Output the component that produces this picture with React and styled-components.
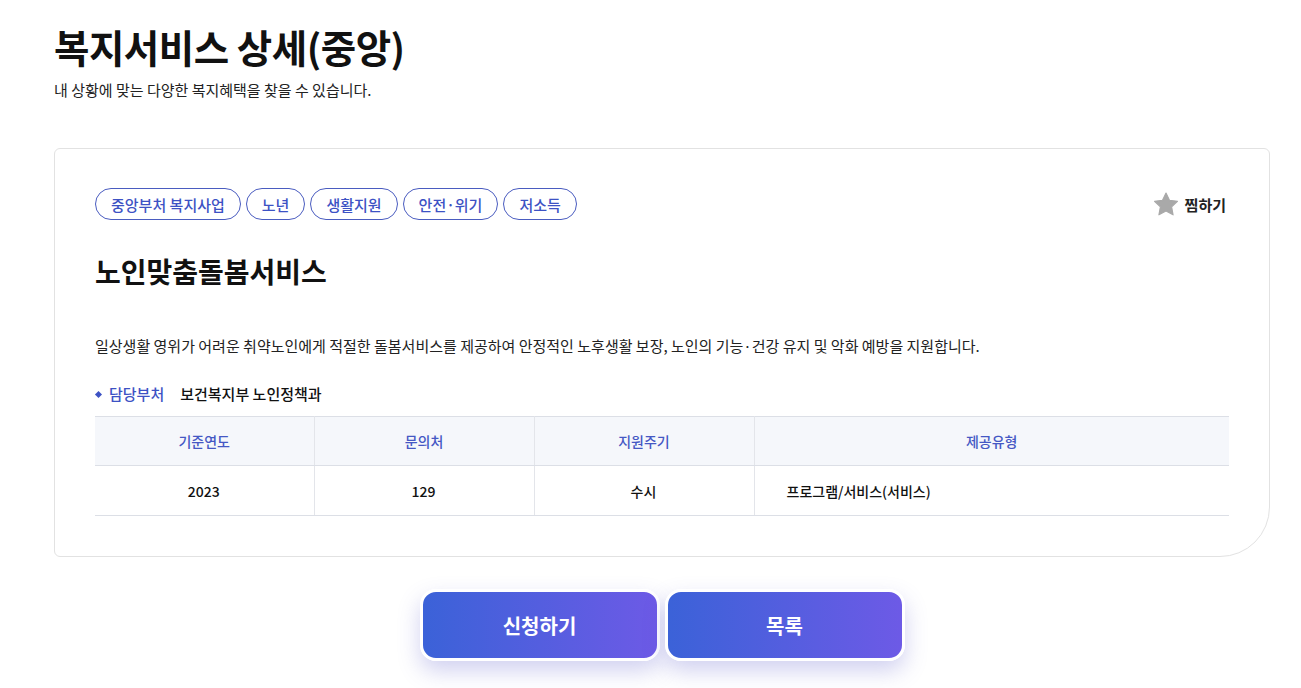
import React from "react";
import styled, { createGlobalStyle } from "styled-components";

const Global = createGlobalStyle`
  html, body { margin: 0; padding: 0; background: #fff; }
  body { font-family: "Noto Sans CJK KR", "Noto Sans", sans-serif; color: #111; }
  * { box-sizing: border-box; }
`;

const Page = styled.div`
  padding: 18px 31px 40px 54px;
`;

const PageTitle = styled.h1`
  margin: 0;
  font-size: 38.5px;
  font-weight: 700;
  line-height: 56px;
  letter-spacing: -0.5px;
  color: #111;
`;

const PageSub = styled.p`
  margin: 6px 0 0;
  font-size: 15px;
  line-height: 20px;
  color: #222;
`;

const Card = styled.section`
  margin-top: 48px;
  border: 1px solid #e2e2e2;
  border-radius: 6px 6px 50px 6px;
  padding: 39px 40px 40px 40px;
`;

const TopRow = styled.div`
  display: flex;
  align-items: center;
  justify-content: space-between;
`;

const Tags = styled.div`
  display: flex;
  gap: 5px;
`;

const Tag = styled.span`
  display: inline-flex;
  align-items: center;
  height: 32px;
  padding: 0 15px;
  border: 1px solid #4a5cc0;
  border-radius: 16px;
  color: #3d52c4;
  font-size: 15px;
  font-weight: 500;
`;

const Fav = styled.button`
  display: flex;
  align-items: center;
  gap: 5px;
  border: 0;
  background: none;
  padding: 0;
  margin-right: 3px;
  font-family: inherit;
  font-size: 15px;
  font-weight: 700;
  color: #222;
  cursor: pointer;
`;

const ServiceTitle = styled.h2`
  margin: 31px 0 0;
  font-size: 28px;
  font-weight: 700;
  line-height: 40px;
  color: #111;
`;

const Desc = styled.p`
  margin: 44px 0 0;
  font-size: 15px;
  line-height: 22px;
  color: #222;
`;

const Dept = styled.div`
  margin-top: 26px;
  display: flex;
  align-items: center;
  font-size: 15px;
  line-height: 22px;
`;

const DeptLabel = styled.span`
  color: #3d52c4;
  font-weight: 500;
  display: flex;
  align-items: center;
  &::before {
    content: "";
    width: 5px;
    height: 5px;
    background: #3d52c4;
    transform: rotate(45deg);
    margin: 0 8px 0 1px;
  }
`;

const DeptValue = styled.span`
  margin-left: 16px;
  font-weight: 500;
  color: #111;
`;

const Table = styled.table`
  margin-top: 11px;
  width: 100%;
  border-collapse: collapse;
  border-top: 1px solid #dcdfe6;
  table-layout: fixed;
`;

const Th = styled.th`
  height: 49px;
  background: #f5f7fb;
  color: #4558c4;
  font-size: 14px;
  font-weight: 500;
  text-align: center;
  border-bottom: 1px solid #dcdfe6;
  border-left: 1px solid #e3e5ea;
  &:first-child { border-left: 0; }
`;

const Td = styled.td`
  height: 50px;
  font-size: 14px;
  font-weight: 500;
  color: #111;
  text-align: ${(p) => (p.$left ? "left" : "center")};
  padding-left: ${(p) => (p.$left ? "32px" : "0")};
  border-bottom: 1px solid #dcdfe6;
  border-left: 1px solid #e3e5ea;
  &:first-child { border-left: 0; }
`;

const Actions = styled.div`
  display: flex;
  justify-content: center;
  gap: 5px;
  margin-top: 32px;
`;

const Btn = styled.button`
  width: 240px;
  height: 72px;
  border: 3px solid #fff;
  border-radius: 16px;
  background: linear-gradient(90deg, #3b62d8 0%, #6d5ae6 100%);
  box-shadow: 0 10px 22px rgba(90, 90, 200, 0.28);
  color: #fff;
  font-family: inherit;
  font-size: 20px;
  font-weight: 700;
  cursor: pointer;
`;

const Star = () => (
  <svg width="28" height="27" viewBox="0 0 24 24" aria-hidden="true">
    <path
      d="M12 1.8l3.1 6.5 7.1.9-5.2 4.9 1.3 7.1L12 17.8l-6.3 3.4 1.3-7.1-5.2-4.9 7.1-.9z"
      fill="#a9a9a9"
      stroke="#a9a9a9"
      strokeWidth="1"
      strokeLinejoin="round"
    />
  </svg>
);

export default function App() {
  const tags = ["중앙부처 복지사업", "노년", "생활지원", "안전·위기", "저소득"];
  return (
    <>
      <Global />
      <Page>
        <PageTitle>복지서비스 상세(중앙)</PageTitle>
        <PageSub>내 상황에 맞는 다양한 복지혜택을 찾을 수 있습니다.</PageSub>
        <Card>
          <TopRow>
            <Tags>
              {tags.map((t) => (
                <Tag key={t}>{t}</Tag>
              ))}
            </Tags>
            <Fav>
              <Star />
              찜하기
            </Fav>
          </TopRow>
          <ServiceTitle>노인맞춤돌봄서비스</ServiceTitle>
          <Desc>
            일상생활 영위가 어려운 취약노인에게 적절한 돌봄서비스를 제공하여 안정적인 노후생활 보장, 노인의 기능·건강 유지 및 악화 예방을 지원합니다.
          </Desc>
          <Dept>
            <DeptLabel>담당부처</DeptLabel>
            <DeptValue>보건복지부 노인정책과</DeptValue>
          </Dept>
          <Table>
            <colgroup>
              <col style={{ width: "219px" }} />
              <col style={{ width: "220px" }} />
              <col style={{ width: "220px" }} />
              <col />
            </colgroup>
            <thead>
              <tr>
                <Th>기준연도</Th>
                <Th>문의처</Th>
                <Th>지원주기</Th>
                <Th>제공유형</Th>
              </tr>
            </thead>
            <tbody>
              <tr>
                <Td>2023</Td>
                <Td>129</Td>
                <Td>수시</Td>
                <Td $left>프로그램/서비스(서비스)</Td>
              </tr>
            </tbody>
          </Table>
        </Card>
        <Actions>
          <Btn>신청하기</Btn>
          <Btn>목록</Btn>
        </Actions>
      </Page>
    </>
  );
}
